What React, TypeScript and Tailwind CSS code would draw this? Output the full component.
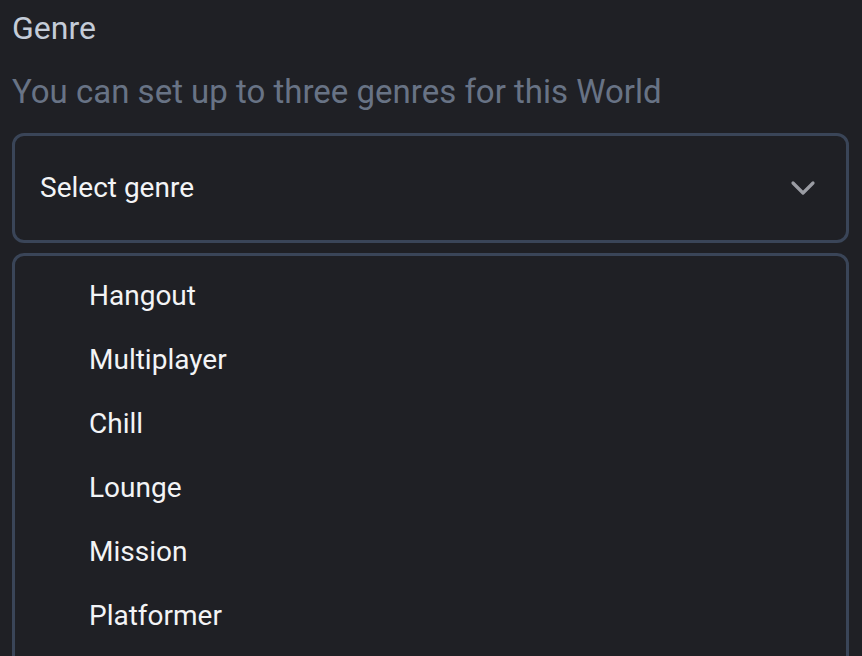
const genres = ["Hangout", "Multiplayer", "Chill", "Lounge", "Mission", "Platformer"];

export default function App() {
  return (
    <div className="h-[656px] w-[862px] overflow-hidden bg-[#1f2025] px-3 pt-[9px] font-['Roboto',sans-serif]">
      <div className="text-[32px] leading-[38px] text-[#c4ccd8]">Genre</div>
      <div className="mt-[26px] text-[33px] leading-[38px] text-[#687385]">
        You can set up to three genres for this World
      </div>

      {/* Select trigger */}
      <button className="mt-[22px] flex h-[110px] w-[837px] items-center justify-between rounded-xl border-[3px] border-[#3a4558] pl-[25px] pr-[30px] text-left">
        <span className="text-[28px] text-[#f3f4f6]">Select genre</span>
        <svg width="26" height="16" viewBox="0 0 26 16" fill="none">
          <path d="M3 3l10 10 10-10" stroke="#9a9ca3" strokeWidth="3.2" strokeLinecap="round" strokeLinejoin="round" />
        </svg>
      </button>

      {/* Options */}
      <div className="mt-[10px] w-[837px] rounded-xl border-[3px] border-[#3a4558] pb-10 pt-[8px]">
        {genres.map((g) => (
          <div key={g} className="flex h-16 items-center pl-[74px] text-[28px] text-[#f3f4f6]">
            {g}
          </div>
        ))}
      </div>
    </div>
  );
}
